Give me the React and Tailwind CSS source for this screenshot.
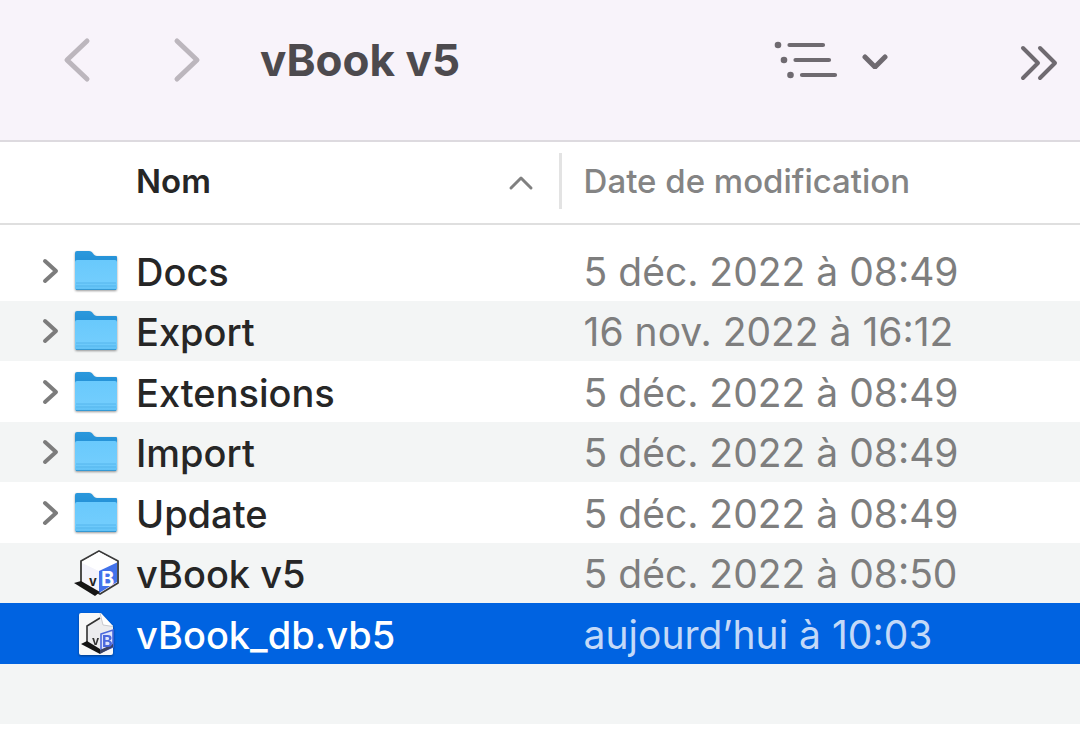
import React, { useState } from 'react';
import clsx from 'clsx';

const files = [
    { name: 'Docs', kind: 'folder', date: '5 déc. 2022 à 08:49' },
    { name: 'Export', kind: 'folder', date: '16 nov. 2022 à 16:12' },
    { name: 'Extensions', kind: 'folder', date: '5 déc. 2022 à 08:49' },
    { name: 'Import', kind: 'folder', date: '5 déc. 2022 à 08:49' },
    { name: 'Update', kind: 'folder', date: '5 déc. 2022 à 08:49' },
    { name: 'vBook v5', kind: 'app', date: '5 déc. 2022 à 08:50' },
    { name: 'vBook_db.vb5', kind: 'document', date: 'aujourd’hui à 10:03' },
];

const Chevron = ({ d, width, height, stroke }) => (
    <svg
        width={width}
        height={height}
        viewBox={`0 0 ${width} ${height}`}
        fill="none"
        stroke="currentColor"
        strokeWidth={stroke}
        strokeLinecap="round"
        strokeLinejoin="round"
        aria-hidden="true"
    >
        <path d={d} />
    </svg>
);

const FolderIcon = () => (
    <svg width="48" height="48" viewBox="0 0 48 48" className="drop-shadow-[0_1px_1px_rgba(0,0,0,0.4)]" aria-hidden="true">
        <defs>
            <linearGradient id="folder-front" x1="0" y1="0" x2="0" y2="1">
                <stop offset="0" stopColor="#69c9fc" />
                <stop offset="0.75" stopColor="#72cdfd" />
                <stop offset="1" stopColor="#5fc0f5" />
            </linearGradient>
            <linearGradient id="folder-back" x1="0" y1="0" x2="0" y2="1">
                <stop offset="0" stopColor="#2b98dc" />
                <stop offset="1" stopColor="#1483cb" />
            </linearGradient>
        </defs>
        <path d="M3 6a2 2 0 0 1 2-2h12c2 0 3 1 4 2.500s2 2.500 4 2.500h19a1 1 0 0 1 1 1v31H3z" fill="url(#folder-back)" />
        <path d="M3 15a2 2 0 0 1 2-2h38a2 2 0 0 1 2 2v26a2 2 0 0 1-2 2H5a2 2 0 0 1-2-2z" fill="url(#folder-front)" />
        <path d="M4 36h40M4 39h40" stroke="#55b5ec" strokeWidth="1" />
        <path d="M4 42.500h40" stroke="#3699d3" strokeWidth="1" />
    </svg>
);

const AppIcon = () => (
    <svg width="48" height="48" viewBox="0 0 48 48" aria-hidden="true">
        <path d="M9 12 27 2 46 12V34L28 45 9 35z" fill="#fff" stroke="#3a3a3a" strokeWidth="1.8" strokeLinejoin="round" />
        <path d="M10 14 27 22V44L10 35z" fill="#f3f3fb" />
        <path d="M10 13 27 3 45 13 27 22z" fill="#fff" />
        <path d="M27 22 45 13.500V33L27 44z" fill="#4272ea" />
        <path d="M2 34 9 32 28 43 23 47z" fill="#151515" />
        <text x="17" y="37" fontSize="13" fontWeight="700" fill="#222">v</text>
        <text x="29" y="37" fontSize="20" fontWeight="700" fill="#fff">B</text>
    </svg>
);

const DocumentIcon = () => (
    <svg width="48" height="48" viewBox="0 0 48 48" className="drop-shadow-[0_1px_1px_rgba(0,0,0,0.4)]" aria-hidden="true">
        <path d="M9 3h20l12 13v27a2 2 0 0 1-2 2H9a2 2 0 0 1-2-2V5a2 2 0 0 1 2-2z" fill="#f8f8f8" />
        <path d="M14 16 27 8 41 16V35L27 41 14 34z" fill="#ececee" />
        <path d="M15 34V16L28 8" fill="none" stroke="#333" strokeWidth="1.600" />
        <path d="M29 24 41 20V37L29 42z" fill="#dfe4fb" stroke="#4a68dc" strokeWidth="1.600" />
        <path d="M9 34 15 31 28 39 28 44z" fill="#151515" />
        <path d="M28 44 41 37V34L28 40z" fill="#3c4260" />
        <path d="M28 3 41 16.500 31 15z" fill="#fff" />
        <path d="M28 3 31 15 41 16.500" fill="none" stroke="#c9c9cd" strokeWidth="1" />
        <text x="20" y="35" fontSize="12" fontWeight="700" fill="#333">v</text>
        <text x="30" y="37" fontSize="16" fontWeight="700" fill="#4a68dc">B</text>
    </svg>
);

const icons = { folder: FolderIcon, app: AppIcon, document: DocumentIcon };

const Toolbar = () => (
    <header className="flex items-center h-[142px] pb-5 pl-15 pr-5 bg-[#f8f3fa] border-b-2 border-[#dddadf] text-[#6f6a70]">
        <button type="button" aria-label="Précédent" className="text-[#bcb6bd]">
            <Chevron d="M27 5 7 24 27 43" width={34} height={48} stroke={5} />
        </button>
        <button type="button" aria-label="Suivant" className="ml-19 text-[#bcb6bd]">
            <Chevron d="M7 5 27 24 7 43" width={34} height={48} stroke={5} />
        </button>
        <h1 className="ml-14 text-[44px] leading-12 font-bold text-[#4d4a4e] whitespace-nowrap">vBook v5</h1>
        <button type="button" aria-label="Présentation" className="ml-auto flex items-center gap-6">
            <svg width="64" height="40" viewBox="0 0 64 40" aria-hidden="true">
                <g fill="currentColor">
                    <circle cx="4" cy="5" r="3.300" />
                    <circle cx="10" cy="20" r="3.300" />
                    <circle cx="16.500" cy="35" r="3.300" />
                </g>
                <path d="M15.500 5H49M21.500 20H55M28 35H61" stroke="currentColor" strokeWidth="4.200" strokeLinecap="round" />
            </svg>
            <Chevron d="M3 6 13 16 23 6" width={26} height={18} stroke={5} />
        </button>
        <button type="button" aria-label="Plus" className="ml-33">
            <Chevron d="M3 10 18 25 3 40M20 10 35 25 20 40" width={40} height={44} stroke={4} />
        </button>
    </header>
);

const Row = ({ file, selected, onSelect }) => {
    const Icon = icons[file.kind];

    return (
        <tr
            onClick={onSelect}
            aria-selected={selected}
            className={clsx(
                'odd:h-[61px] even:h-[60px]',
                selected ? 'bg-[#0063e1] text-white' : 'even:bg-[#f3f5f5] text-[#262626]'
            )}
        >
            <td className="p-0">
                <div className="flex items-center pl-10">
                    <div className="flex w-8 shrink-0">
                        {file.kind === 'folder' && (
                            <button type="button" aria-label={`Ouvrir ${file.name}`} className="text-[#7c7c7c]">
                                <Chevron d="M5 4 16 14 5 24" width={20} height={28} stroke={4} />
                            </button>
                        )}
                    </div>
                    <Icon />
                    <span className="ml-4 pt-[2px] text-[38px] leading-12 font-medium whitespace-nowrap">{file.name}</span>
                </div>
            </td>
            <td className={clsx('p-0 pt-[2px] pl-[22px] text-[39px] leading-12 whitespace-nowrap', selected ? 'text-[#c3d9f8]' : 'text-[#7e7e7e]')}>
                {file.date}
            </td>
        </tr>
    );
};

const App = () => {
    const [selected, setSelected] = useState('vBook_db.vb5');

    return (
        <div className="min-h-screen bg-white overflow-hidden font-['Inter',sans-serif]">
            <Toolbar />
            <table className="w-full table-fixed border-collapse text-left">
                <thead className="border-b-2 border-[#dfdfdf]">
                    <tr className="h-[82px]">
                        <th scope="col" aria-sort="ascending" className="w-[52%] p-0 pb-1">
                            <div className="flex items-center h-14 border-r-3 border-[#e3e3e3] pl-34 pr-6">
                                <button type="button" className="flex w-full items-center justify-between text-[33px] leading-10 font-semibold text-[#262626]">
                                    Nom
                                    <span className="pt-1 text-[#808080]">
                                        <Chevron d="M4 14 14 4 24 14" width={28} height={18} stroke={3} />
                                    </span>
                                </button>
                            </div>
                        </th>
                        <th scope="col" className="p-0 pb-1 pl-[22px] text-[33px] leading-10 font-medium text-[#848484] whitespace-nowrap">
                            <button type="button">Date de modification</button>
                        </th>
                    </tr>
                </thead>
                <tbody className="before:table-row before:h-4">
                    {files.map((file) => (
                        <Row
                            key={file.name}
                            file={file}
                            selected={file.name === selected}
                            onSelect={() => setSelected(file.name)}
                        />
                    ))}
                    <tr className="h-[60px] bg-[#f3f5f5]">
                        <td colSpan={2} className="p-0" />
                    </tr>
                </tbody>
            </table>
        </div>
    );
};

export default App;
